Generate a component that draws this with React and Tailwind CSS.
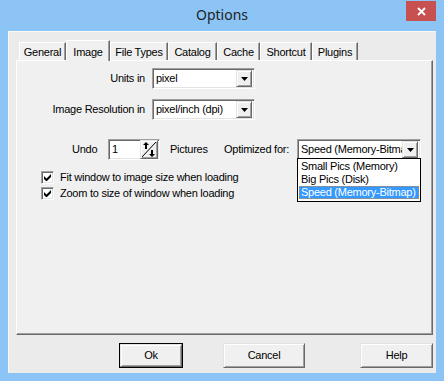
import React from 'react';

const raised =
  'border border-t-[#e3e3e3] border-l-[#e3e3e3] border-r-[#696969] border-b-[#696969] shadow-[inset_1px_1px_0_#ffffff,inset_-1px_-1px_0_#a0a0a0] bg-[#f0f0f0]';
const sunken =
  'border border-t-[#a0a0a0] border-l-[#a0a0a0] border-r-white border-b-white shadow-[inset_1px_1px_0_#696969,inset_-1px_-1px_0_#e3e3e3] bg-white';

function ArrowButton() {
  return (
    <div className={`${raised} w-[16px] h-[17px] flex items-center justify-center shrink-0`}>
      <svg width="7" height="4" viewBox="0 0 7 4">
        <path d="M0 0h7L3.5 4z" fill="#000" />
      </svg>
    </div>
  );
}

function Dropdown({ value, width }) {
  return (
    <div className={`${sunken} h-[21px] flex items-center pl-[3px] pr-[2px]`} style={{ width }}>
      <span className="flex-1 overflow-hidden whitespace-nowrap text-black">{value}</span>
      <ArrowButton />
    </div>
  );
}

function Checkbox({ label }) {
  return (
    <div className="flex items-center h-[13px] ml-[24px]">
      <div className={`${sunken} w-[13px] h-[13px] flex items-center justify-center`}>
        <svg width="7" height="7" viewBox="0 0 7 7">
          <path d="M0 2v3l2 2h1l4-4V0L2.5 4.5z" fill="#000" />
        </svg>
      </div>
      <span className="ml-[6px] text-black whitespace-nowrap">{label}</span>
    </div>
  );
}

const tabs = [
  { name: 'General', w: 47 },
  { name: 'Image', w: 44, active: true },
  { name: 'File Types', w: 58 },
  { name: 'Catalog', w: 49 },
  { name: 'Cache', w: 43 },
  { name: 'Shortcut', w: 52 },
  { name: 'Plugins', w: 46 },
];

export default function App() {
  return (
    <div className="w-[444px] h-[381px] bg-[#8cc4f5] flex flex-col font-['Liberation_Sans',Arial,sans-serif] text-[11px] tracking-[-0.25px]">
      {/* title bar */}
      <div className="h-[31px] relative flex items-center justify-center shrink-0">
        <span className="font-['Noto_Sans',sans-serif] text-[14px] tracking-normal text-[#222] -mt-[2px]">Options</span>
        <div className="absolute right-[8px] top-[1px] w-[30px] h-[20px] bg-[#c75050] flex items-center justify-center">
          <svg width="9" height="9" viewBox="0 0 9 9">
            <path d="M1 1l7 7M8 1L1 8" stroke="#fff" strokeWidth="1.8" />
          </svg>
        </div>
      </div>

      {/* client area */}
      <div className="ml-[8px] w-[428px] h-[342px] bg-[#ebebeb] border-t border-l border-[#f8f8f8] pl-[7px] pr-[3px] pt-[8px] flex flex-col">
        {/* tabs */}
        <div className="flex items-end h-[20px] ml-[3px] relative z-10">
          {tabs.map(t =>
            t.active ? (
              <div
                key={t.name}
                className="h-[21px] -mb-px bg-[#f0f0f0] border-t border-l border-white border-r border-r-[#696969] shadow-[inset_-1px_0_0_#a0a0a0] flex items-start justify-center pt-[3px] text-black"
                style={{ width: t.w }}
              >
                {t.name}
              </div>
            ) : (
              <div
                key={t.name}
                className="h-[18px] bg-[#f0f0f0] border-t border-l border-white border-r border-r-[#696969] shadow-[inset_-1px_0_0_#a0a0a0] flex items-center justify-center pt-[1px] text-black"
                style={{ width: t.w }}
              >
                {t.name}
              </div>
            )
          )}
        </div>

        {/* panel */}
        <div className="relative w-[417px] h-[275px] bg-[#f0f0f0] border-t border-l border-white border-r border-b border-r-[#696969] border-b-[#696969] shadow-[inset_-1px_-1px_0_#a0a0a0] flex flex-col">
          <div className="flex items-center mt-[7px]">
            <span className="w-[128px] text-right text-black">Units in</span>
            <div className="ml-[7px]">
              <Dropdown value="pixel" width={103} />
            </div>
          </div>
          <div className="flex items-center mt-[10px]">
            <span className="w-[128px] text-right text-black">Image Resolution in</span>
            <div className="ml-[7px]">
              <Dropdown value="pixel/inch (dpi)" width={103} />
            </div>
          </div>

          <div className="flex items-center mt-[19px] h-[21px]">
            <span className="ml-[55px] w-[36px] text-black">Undo</span>
            <div className={`${sunken} w-[52px] h-[21px] flex items-center pl-[3px] pr-[1px]`}>
              <span className="flex-1 text-black">1</span>
              <div className={`${raised} w-[18px] h-[19px] shrink-0 flex items-center justify-center`}>
                <svg width="16" height="17" viewBox="0 0 16 17">
                  <path d="M1 16L15 1" stroke="#000" strokeWidth="1" />
                  <path d="M5 1l-3 3h2v4h2V4h2z" fill="#000" />
                  <path d="M11 16l3-3h-2V9h-2v4H8z" fill="#000" />
                </svg>
              </div>
            </div>
            <span className="ml-[10px] w-[54px] text-black">Pictures</span>
            <span className="w-[73px] text-black whitespace-nowrap">Optimized for:</span>
            <Dropdown value="Speed (Memory-Bitmap)" width={124} />
          </div>

          <div className="mt-[11px]">
            <Checkbox label="Fit window to image size when loading" />
          </div>
          <div className="mt-[3px]">
            <Checkbox label="Zoom to size of window when loading" />
          </div>

          {/* open dropdown list */}
          <div className="absolute left-[280px] top-[97px] w-[124px] h-[44px] bg-white border border-black flex flex-col pt-[1px] px-[1px] text-black whitespace-nowrap overflow-hidden">
            <div className="h-[13px] leading-[13px] pl-[2px]">Small Pics (Memory)</div>
            <div className="h-[13px] leading-[13px] pl-[2px]">Big Pics (Disk)</div>
            <div className="h-[13px] leading-[13px] pl-[2px] bg-[#3399ff] text-white outline-1 outline-dotted outline-[#cc8844] -outline-offset-1">
              Speed (Memory-Bitmap)
            </div>
          </div>
        </div>

        {/* buttons */}
        <div className="flex mt-[8px]">
          <div className="ml-[103px] w-[64px] h-[25px] border border-black">
            <div className={`${raised} w-full h-full flex items-center justify-center text-black`}>Ok</div>
          </div>
          <div className={`${raised} ml-[40px] w-[82px] h-[25px] flex items-center justify-center text-black`}>Cancel</div>
          <div className={`${raised} ml-[55px] w-[73px] h-[25px] flex items-center justify-center text-black`}>Help</div>
        </div>
      </div>
    </div>
  );
}
